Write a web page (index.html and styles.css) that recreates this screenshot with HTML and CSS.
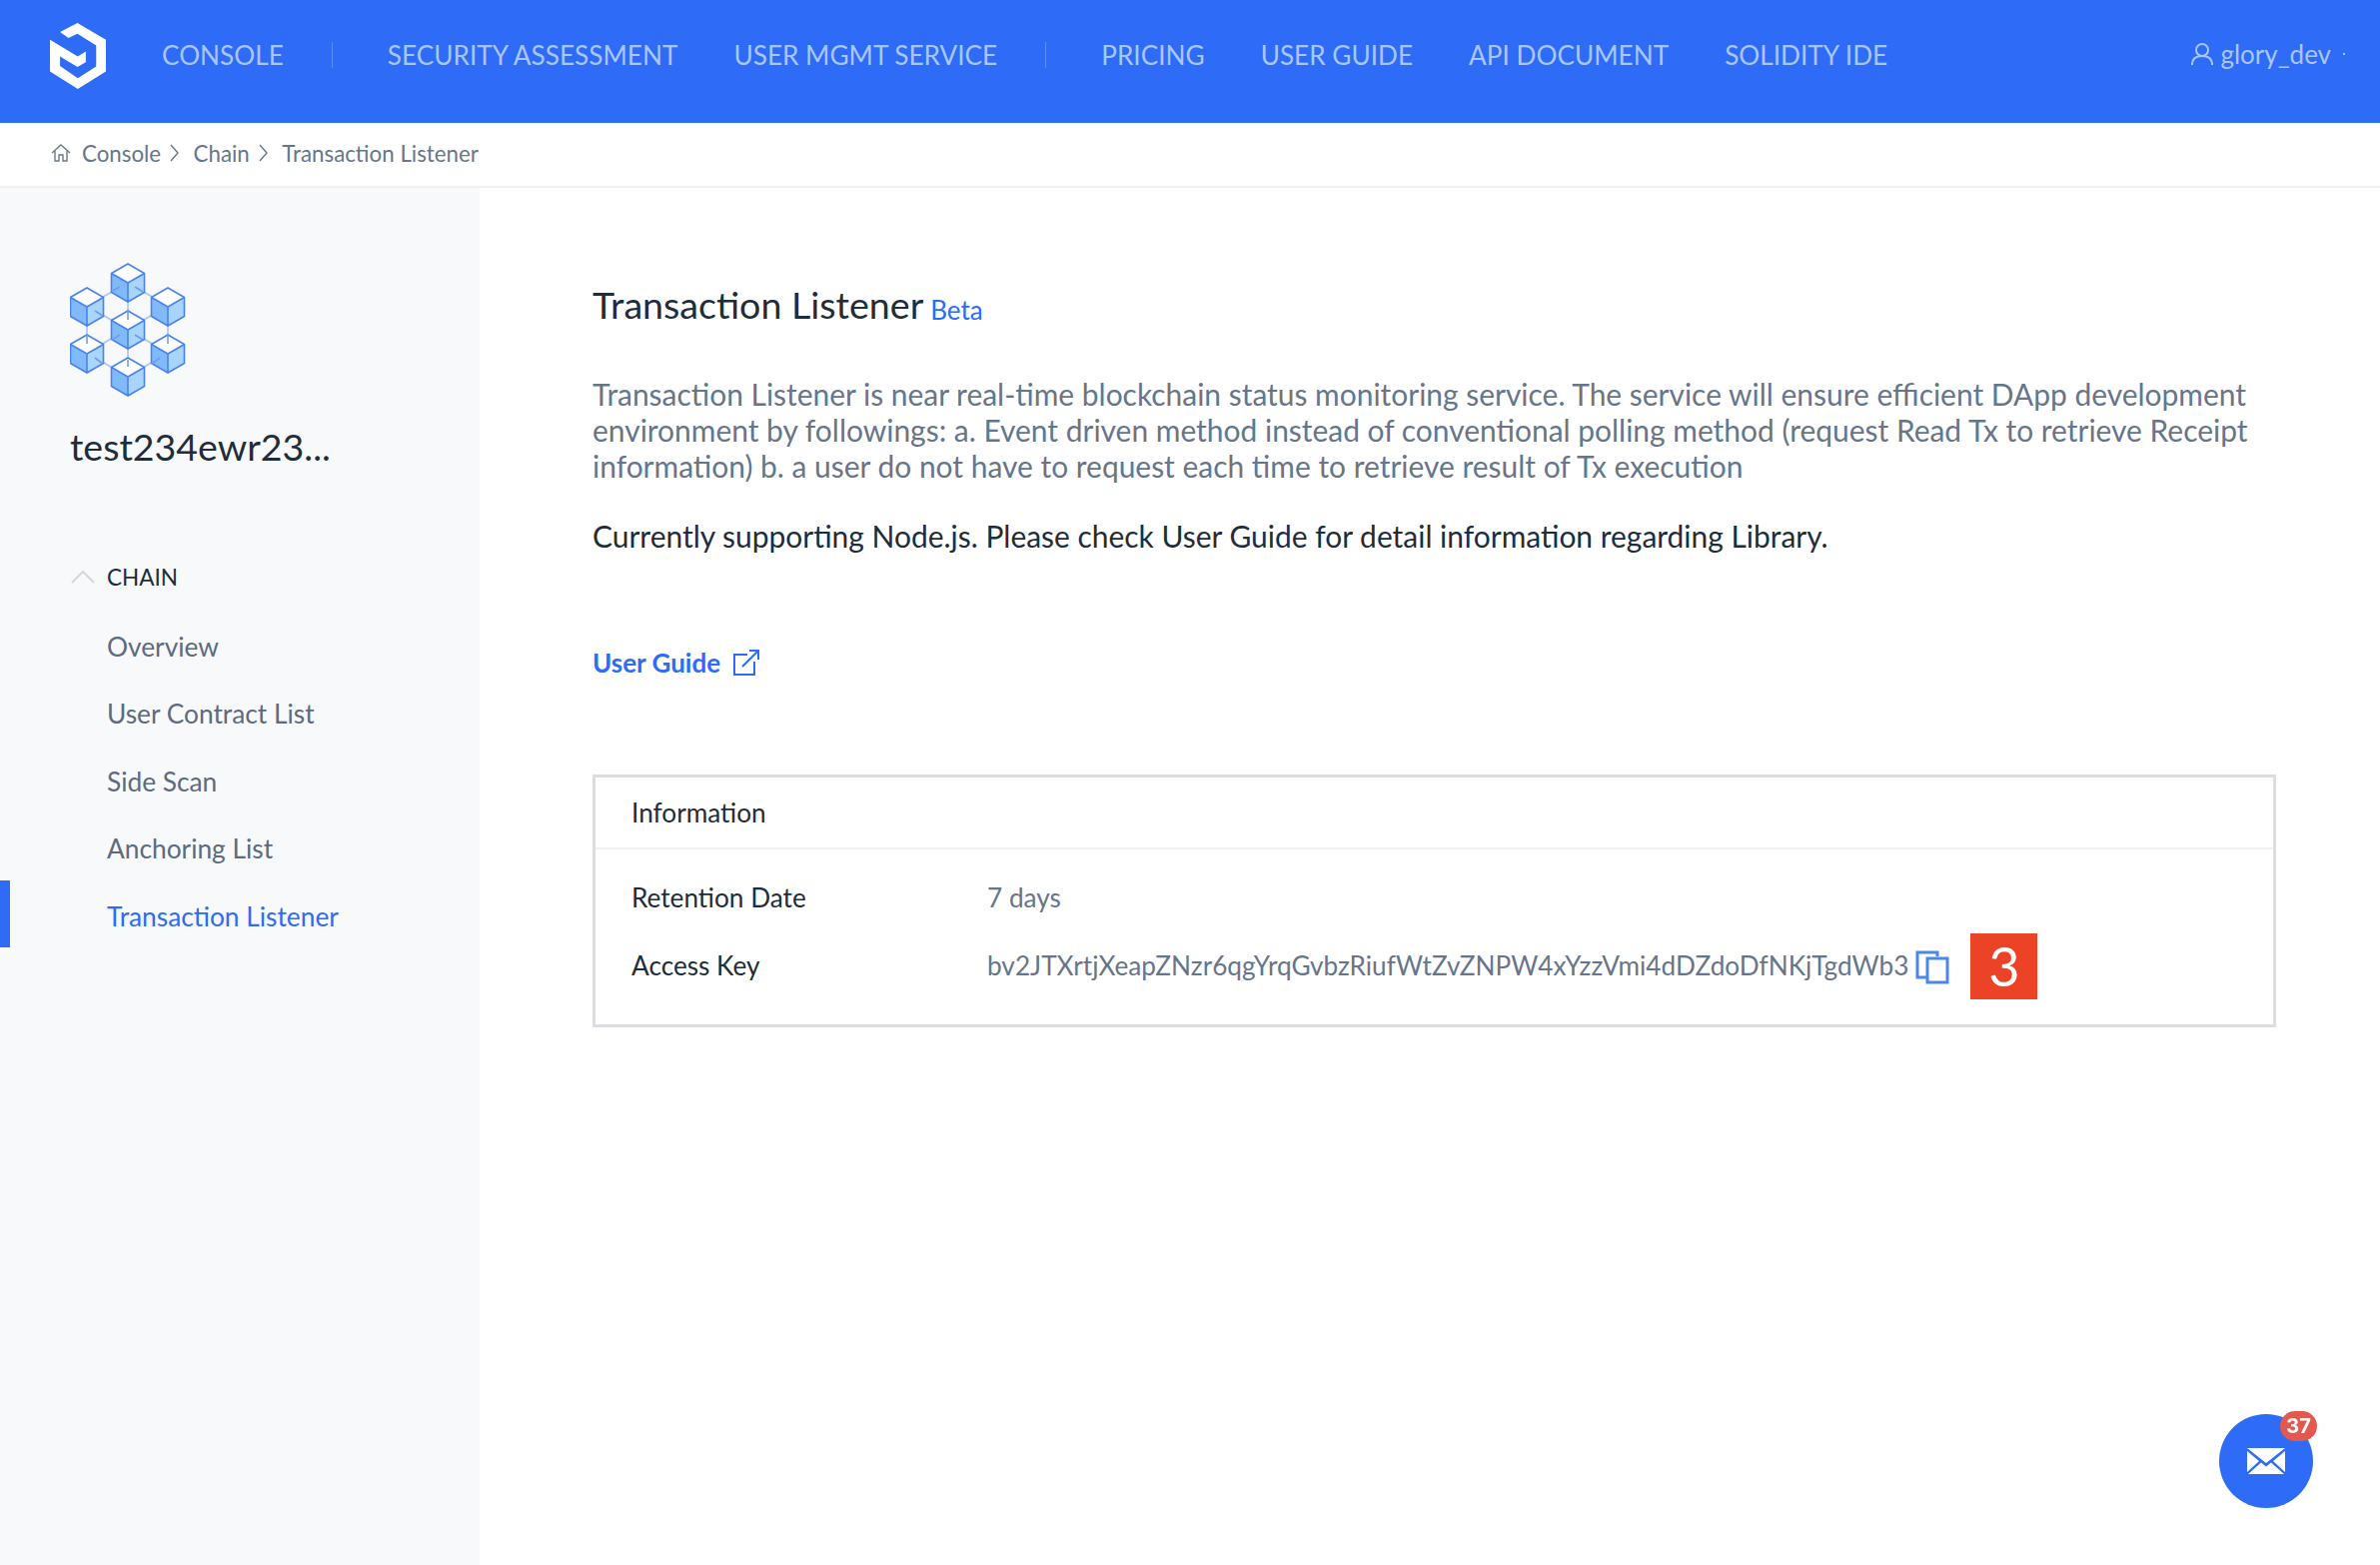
FILE: index.html
```html
<html>
<head>
<meta charset="utf-8">
<title>Transaction Listener</title>
<link rel="stylesheet" href="styles.css">
</head>
<body>
	<header class="topbar">
		<svg class="logo" viewBox="30 25 167 197" width="56" height="66">
			<path d="M60 52 L112 25 L197 75 V170 L113 222 L30 170 V75 L113 125 L137 110 V142 L112 156 L60 125 V153 L113 190 L168 155 V92 L112 57 L85 70 Z" fill="#fff"/>
		</svg>
		<nav class="mainnav">
			<a>CONSOLE</a>
			<span class="sep"></span>
			<a>SECURITY ASSESSMENT</a>
			<a>USER MGMT SERVICE</a>
			<span class="sep"></span>
			<a>PRICING</a>
			<a>USER GUIDE</a>
			<a>API DOCUMENT</a>
			<a>SOLIDITY IDE</a>
		</nav>
		<div class="user">
			<svg viewBox="0 0 24 24" width="24" height="24" fill="none" stroke="currentColor" stroke-width="2"><circle cx="12" cy="8" r="6"/><path d="M2 23c0-6 4-9 10-9s10 3 10 9"/></svg>
			<span>glory_dev</span>
			<i class="dot"></i>
		</div>
	</header>

	<div class="crumbs">
		<svg class="home" viewBox="0 0 20 20" width="20" height="20" fill="none" stroke="#6b7a8c" stroke-width="1.4"><path d="M1 10 L10 2 L19 10 M4 8 V18 H8 V12 H12 V18 H16 V8"/></svg>
		<span>Console</span>
		<svg class="chev" viewBox="0 0 9 18" width="9" height="18" fill="none" stroke="#67768a" stroke-width="1.400"><path d="M1 1 L8 9 L1 17"/></svg>
		<span>Chain</span>
		<svg class="chev" viewBox="0 0 9 18" width="9" height="18" fill="none" stroke="#67768a" stroke-width="1.400"><path d="M1 1 L8 9 L1 17"/></svg>
		<span>Transaction Listener</span>
	</div>

	<div class="layout">
		<aside class="sidebar">
			<svg class="cubes" viewBox="0 0 116 134" width="116" height="134">
				<defs>
					<g id="cube">
						<path d="M0 19 L16.5 9.500 V-9.500 L0 0 Z" fill="#a9d5fd"/>
						<path d="M0 19 L-16.500 9.500 V-9.500 L0 0 Z" fill="#80baf8"/>
						<path d="M0 -19 L16.500 -9.500 L0 0 L-16.500 -9.500 Z" fill="#fff"/>
						<path d="M0 -19 L16.500 -9.500 V9.500 L0 19 L-16.500 9.500 V-9.500 Z M-16.500 -9.500 L0 0 L16.500 -9.500 M0 0 V19" fill="none" stroke="#4a82f0" stroke-width="1.600"/>
					</g>
				</defs>
				<path d="M58 20 L17 43 V90 L58 114 L98 90 V43 Z M58 20 V114 M17 43 L98 90 M98 43 L17 90" fill="none" stroke="#a9c4f7" stroke-width="1.600"/>
				<use href="#cube" x="58" y="20"/>
				<use href="#cube" x="17" y="44"/>
				<use href="#cube" x="98" y="44"/>
				<use href="#cube" x="58" y="67"/>
				<use href="#cube" x="17" y="91"/>
				<use href="#cube" x="98" y="91"/>
				<use href="#cube" x="58" y="114"/>
				<path d="M50 24 L43 28 M65 24 L73 29 M50 72 L42 77 M65 72 L73 77 M58 48 V57 M58 97 V104 M17 72 V81 M98 72 V81 M25 48 L33 53 M25 95 L33 101 M90 95 L82 101" fill="none" stroke="#6f9cf2" stroke-width="1.600"/>
			</svg>
			<div class="chain-name">test234ewr23...</div>
			<div class="menu-head">
				<svg viewBox="0 0 24 14" width="24" height="14" fill="none" stroke="#d3d7dc" stroke-width="2"><path d="M1 13 L12 2 L23 13"/></svg>
				<span>CHAIN</span>
			</div>
			<ul class="menu">
				<li>Overview</li>
				<li>User Contract List</li>
				<li>Side Scan</li>
				<li>Anchoring List</li>
				<li class="active">Transaction Listener</li>
			</ul>
		</aside>

		<main class="content">
			<h1>Transaction Listener <small>Beta</small></h1>
			<p class="desc">Transaction Listener is near real-time blockchain status monitoring service. The service will ensure efficient DApp development environment by followings: a. Event driven method instead of conventional polling method (request Read Tx to retrieve Receipt information) b. a user do not have to request each time to retrieve result of Tx execution</p>
			<p class="support">Currently supporting Node.js. Please check User Guide for detail information regarding Library.</p>
			<a class="guide">User Guide
				<svg viewBox="0 0 28 28" width="28" height="28" fill="none" stroke="#2f6cf6" stroke-width="2"><path d="M15 6 H2 V26 H22 V13 M10 18 L26 2 M17 2 H26 V11"/></svg>
			</a>
			<section class="info">
				<div class="info-title">Information</div>
				<div class="info-body">
					<div class="info-row">
						<span class="info-label">Retention Date</span>
						<span class="info-value">7 days</span>
					</div>
					<div class="info-row">
						<span class="info-label">Access Key</span>
						<span class="info-value">bv2JTXrtjXeapZNzr6qgYrqGvbzRiufWtZvZNPW4xYzzVmi4dDZdoDfNKjTgdWb3</span>
						<svg class="copy" viewBox="0 0 34 34" width="34" height="34" fill="none" stroke="#4a87e8" stroke-width="3"><path d="M22 6 V2 H2 V27 H12"/><rect x="12" y="8" width="20" height="24" fill="#fff"/></svg>
						<span class="step">3</span>
					</div>
				</div>
			</section>
		</main>
	</div>

	<div class="fab">
		<svg viewBox="0 0 38 26" width="38" height="26"><path d="M0 0 H38 L19 15 Z M0 3 L12 13 L0 24 Z M38 3 L26 13 L38 24 Z M14 14.500 L19 18.500 L24 14.500 L37 26 H1 Z" fill="#fff"/></svg>
		<span class="fab-count">37</span>
	</div>
</body>
</html>
```

FILE: styles.css
```css
* {
	box-sizing: border-box;
}

body {
	margin: 0;
	min-height: 1566px;
	background: #fff;
	color: #1f2d3a;
	font-family: Lato, "Liberation Sans", sans-serif;
	display: flex;
	flex-direction: column;
}

.topbar {
	height: 123px;
	background: #2e6bf6;
	display: flex;
	align-items: flex-start;
	padding: 23px 35px 0 50px;
	color: #a9c6fb;
}

.logo {
	flex: none;
}

.mainnav {
	display: flex;
	align-items: center;
	height: 63px;
	margin-left: 56px;
	font-size: 26.200px;
}

.mainnav a {
	margin-right: 56px;
}

.mainnav .sep {
	width: 1px;
	height: 26px;
	background: #5c8cf7;
	margin: 0 55px 0 -8px;
}

.user {
	margin-left: auto;
	display: flex;
	align-items: center;
	height: 62px;
	font-size: 26px;
	gap: 6px;
}

.user .dot {
	width: 2px;
	height: 2px;
	margin-left: 6px;
	background: #a9c6fb;
}

.crumbs {
	height: 65px;
	border-bottom: 2px solid #f0f1f4;
	display: flex;
	align-items: center;
	padding: 0 0 3px 51px;
	font-size: 22.300px;
	color: #67768a;
}

.home {
	margin-right: 11px;
}

.chev {
	margin: 0 14.500px 0 9px;
}

.layout {
	flex: 1;
	display: flex;
}

.sidebar {
	width: 480px;
	background: #f8f9fb;
	padding-top: 75px;
}

.cubes {
	display: block;
	margin-left: 70px;
}

.chain-name {
	margin: 27px 0 0 70px;
	font-size: 37.500px;
	line-height: 46px;
}

.menu-head {
	display: flex;
	align-items: center;
	margin: 90px 0 0 71px;
	height: 34px;
	font-size: 22.500px;
	gap: 12px;
}

.menu {
	list-style: none;
	margin: 17px 0 0;
	padding: 0;
	font-size: 26.300px;
	color: #5c6b7e;
}

.menu li {
	height: 67.400px;
	line-height: 73px;
	padding-left: 107px;
}

.menu li.active {
	color: #2e6bf6;
	border-left: 10px solid #2e6bf6;
	padding-left: 97px;
}

.content {
	flex: 1;
	padding: 92px 104px 0 113px;
}

h1 {
	margin: 0;
	font-size: 37.600px;
	line-height: 50px;
	font-weight: 400;
	color: #1f2d3a;
}

h1 small {
	font-size: 26px;
	color: #2e6bf6;
	margin-left: -2px;
	vertical-align: -1px;
}

.desc {
	margin: 41px 0 0;
	font-size: 29.950px;
	line-height: 36px;
	color: #66758a;
}

.support {
	margin: 34px 0 0;
	font-size: 29.950px;
	line-height: 36px;
	color: #1f2d3a;
}

.guide {
	display: flex;
	align-items: center;
	gap: 12px;
	margin-top: 93px;
	font-size: 26px;
	font-weight: 700;
	color: #2e6bf6;
}

.info {
	margin-top: 96px;
	height: 253px;
	border: 3px solid #d9dde4;
}

.info-title {
	height: 72px;
	line-height: 71px;
	padding-left: 36px;
	font-size: 26.200px;
	border-bottom: 2px solid #eef0f3;
}

.info-body {
	padding: 14px 0 0 36px;
}

.info-row {
	display: flex;
	align-items: center;
	height: 68px;
	font-size: 26.200px;
}

.info-label {
	width: 356px;
}

.info-value {
	color: #66758a;
}

.copy {
	margin: 4px 0 0 7px;
	flex: none;
}

.step {
	margin: 2px 0 0 21px;
	width: 67px;
	height: 66px;
	background: #ec4225;
	color: #fff;
	font-size: 54px;
	line-height: 66px;
	text-align: center;
}

.fab {
	position: fixed;
	left: 2221px;
	top: 1415px;
	width: 94px;
	height: 94px;
	border-radius: 50%;
	background: #2e6bf6;
	display: flex;
	align-items: center;
	justify-content: center;
}

.fab-count {
	position: absolute;
	left: 61px;
	top: -3px;
	width: 37px;
	height: 30px;
	border-radius: 15px;
	background: #e25950;
	color: #fff;
	font-family: Inter, sans-serif;
	font-size: 20px;
	font-weight: 700;
	line-height: 30px;
	text-align: center;
}
```
